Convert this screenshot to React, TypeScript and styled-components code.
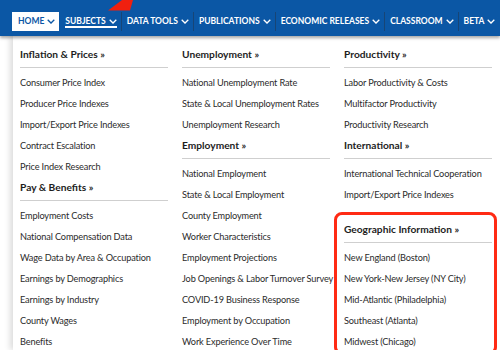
import React from "react";
import styled, { createGlobalStyle } from "styled-components";

const GlobalStyle = createGlobalStyle`
  html, body {
    margin: 0;
    padding: 0;
    background: #ffffff;
    font-family: Lato, "Liberation Sans", sans-serif;
    overflow: hidden;
  }
`;

const Page = styled.div`
  position: relative;
  width: 500px;
  height: 350px;
  overflow: hidden;
`;

const NavBar = styled.nav`
  position: relative;
  z-index: 2;
  height: 36px;
  display: flex;
  align-items: center;
  padding-left: 12px;
  background: #0b57a5;
  box-shadow: 0 2px 3px rgba(0, 0, 0, 0.35);
`;

const NavItem = styled.div<{ $home?: boolean; $sep?: boolean }>`
  display: flex;
  align-items: center;
  gap: 3px;
  height: 19px;
  padding: 0 4px 0 ${(p) => (p.$sep ? "5px" : "6px")};
  margin-top: 6px;
  font-size: 8.5px;
  font-weight: 700;
  text-transform: uppercase;
  white-space: nowrap;
  color: ${(p) => (p.$home ? "#0b57a5" : "#ffffff")};
  background: ${(p) => (p.$home ? "#ffffff" : "transparent")};
  border-left: ${(p) => (p.$sep ? "1px solid #174576" : "none")};
`;

const Underlined = styled.span`
  display: flex;
  align-items: center;
  gap: 3px;
  padding-top: 2px;
  border-bottom: 2px solid #ffffff;
`;

const Arrow = styled.svg`
  position: absolute;
  top: 0;
  left: 105px;
  z-index: 3;
`;

const Panel = styled.div`
  margin-left: 13px;
  height: 314px;
  background: #ffffff;
  box-shadow: -3px 0 6px rgba(0, 0, 0, 0.14);
  display: grid;
  grid-template-columns: repeat(3, 148px);
  column-gap: 14px;
  align-items: start;
  padding: 11px 0 0 7px;
  box-sizing: border-box;
`;

const Column = styled.div`
  display: flex;
  flex-direction: column;
`;

const Heading = styled.div`
  font-size: 10.2px;
  font-weight: 700;
  color: #1d1d1d;
  line-height: 14px;
  padding-bottom: 6px;
  border-bottom: 1px solid #cfcfcf;
  margin: 3.5px 0 3.5px;
  white-space: nowrap;
  &:first-child {
    margin-top: 0;
  }
`;

const Link = styled.div`
  font-size: 9.2px;
  letter-spacing: -0.15px;
  color: #2b2b2b;
  line-height: 21px;
  white-space: nowrap;
`;

const Highlight = styled.div`
  margin: 7.5px -5px 0 -10px;
  padding: 7px 2px 0 7px;
  border: 3px solid #ff2a14;
  border-radius: 8px;
  display: flex;
  flex-direction: column;
`;

const Chevron = () => (
  <svg width="8" height="5" viewBox="0 0 8 5">
    <path d="M0.7 0.8 L4 4 L7.3 0.8" fill="none" stroke="currentColor" strokeWidth="1.3" />
  </svg>
);

type Section = { title: string; links: string[] };

const columns: Section[][] = [
  [
    {
      title: "Inflation & Prices »",
      links: [
        "Consumer Price Index",
        "Producer Price Indexes",
        "Import/Export Price Indexes",
        "Contract Escalation",
        "Price Index Research",
      ],
    },
    {
      title: "Pay & Benefits »",
      links: [
        "Employment Costs",
        "National Compensation Data",
        "Wage Data by Area & Occupation",
        "Earnings by Demographics",
        "Earnings by Industry",
        "County Wages",
        "Benefits",
      ],
    },
  ],
  [
    {
      title: "Unemployment »",
      links: ["National Unemployment Rate", "State & Local Unemployment Rates", "Unemployment Research"],
    },
    {
      title: "Employment »",
      links: [
        "National Employment",
        "State & Local Employment",
        "County Employment",
        "Worker Characteristics",
        "Employment Projections",
        "Job Openings & Labor Turnover Survey",
        "COVID-19 Business Response",
        "Employment by Occupation",
        "Work Experience Over Time",
      ],
    },
  ],
  [
    {
      title: "Productivity »",
      links: ["Labor Productivity & Costs", "Multifactor Productivity", "Productivity Research"],
    },
    {
      title: "International »",
      links: ["International Technical Cooperation", "Import/Export Price Indexes"],
    },
  ],
];

const geo: Section = {
  title: "Geographic Information »",
  links: [
    "New England (Boston)",
    "New York-New Jersey (NY City)",
    "Mid-Atlantic (Philadelphia)",
    "Southeast (Atlanta)",
    "Midwest (Chicago)",
  ],
};

const renderSection = (s: Section) => (
  <React.Fragment key={s.title}>
    <Heading>{s.title}</Heading>
    {s.links.map((l) => (
      <Link key={l}>{l}</Link>
    ))}
  </React.Fragment>
);

const navItems = ["Data Tools", "Publications", "Economic Releases", "Classroom", "Beta"];

const App = () => {
  return (
    <Page>
      <GlobalStyle />
      <NavBar>
        <NavItem $home>
          <span>Home</span>
          <Chevron />
        </NavItem>
        <NavItem>
          <Underlined>
            <span>Subjects</span>
            <Chevron />
          </Underlined>
        </NavItem>
        {navItems.map((n) => (
          <NavItem key={n} $sep>
            <span>{n}</span>
            <Chevron />
          </NavItem>
        ))}
      </NavBar>
      <Arrow width="32" height="11" viewBox="0 0 32 11">
        <polygon points="17,0 28,0 25,10.5 3,10.5" fill="#f0200f" />
      </Arrow>
      <Panel>
        {columns.map((col, i) => (
          <Column key={i}>
            {col.map(renderSection)}
            {i === 2 ? <Highlight>{renderSection(geo)}</Highlight> : null}
          </Column>
        ))}
      </Panel>
    </Page>
  );
};

export default App;
